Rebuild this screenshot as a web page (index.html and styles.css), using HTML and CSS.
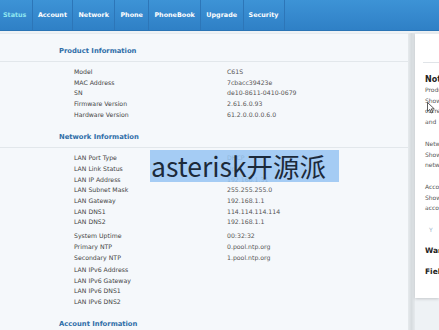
FILE: index.html
```html
<!DOCTYPE html>
<html>
<head>
<meta charset="utf-8">
<link rel="stylesheet" href="styles.css">
</head>
<body>
<div class="nav">
  <div class="tab active">Status</div>
  <div class="tab">Account</div>
  <div class="tab">Network</div>
  <div class="tab">Phone</div>
  <div class="tab">PhoneBook</div>
  <div class="tab">Upgrade</div>
  <div class="tab">Security</div>
</div>
<div class="page">
  <div class="main">
    <div class="sec-head">Product Information</div>
    <div class="group first">
      <div class="row"><span class="lbl">Model</span><span class="val">C61S</span></div>
      <div class="row"><span class="lbl">MAC Address</span><span class="val">7cbacc39423e</span></div>
      <div class="row"><span class="lbl">SN</span><span class="val">de10-8611-0410-0679</span></div>
      <div class="row"><span class="lbl">Firmware Version</span><span class="val">2.61.6.0.93</span></div>
      <div class="row"><span class="lbl">Hardware Version</span><span class="val">61.2.0.0.0.0.6.0</span></div>
    </div>
    <div class="sec-head">Network Information</div>
    <div class="group first">
      <div class="row"><span class="lbl">LAN Port Type</span><span class="val">DHCP</span></div>
      <div class="row"><span class="lbl">LAN Link Status</span><span class="val">Up</span></div>
      <div class="row"><span class="lbl">LAN IP Address</span><span class="val">192.168.1.31</span></div>
      <div class="row"><span class="lbl">LAN Subnet Mask</span><span class="val">255.255.255.0</span></div>
      <div class="row"><span class="lbl">LAN Gateway</span><span class="val">192.168.1.1</span></div>
      <div class="row"><span class="lbl">LAN DNS1</span><span class="val">114.114.114.114</span></div>
      <div class="row"><span class="lbl">LAN DNS2</span><span class="val">192.168.1.1</span></div>
    </div>
    <div class="group">
      <div class="row"><span class="lbl">System Uptime</span><span class="val">00:32:32</span></div>
      <div class="row"><span class="lbl">Primary NTP</span><span class="val">0.pool.ntp.org</span></div>
      <div class="row"><span class="lbl">Secondary NTP</span><span class="val">1.pool.ntp.org</span></div>
    </div>
    <div class="group last">
      <div class="row"><span class="lbl">LAN IPv6 Address</span><span class="val"></span></div>
      <div class="row"><span class="lbl">LAN IPv6 Gateway</span><span class="val"></span></div>
      <div class="row"><span class="lbl">LAN IPv6 DNS1</span><span class="val"></span></div>
      <div class="row"><span class="lbl">LAN IPv6 DNS2</span><span class="val"></span></div>
    </div>
    <div class="sec-head">Account Information</div>
  </div>
  <div class="divider"></div>
  <div class="aside">
    <div class="aside-line"></div>
    <div class="note-title">Notes</div>
    <p class="note">Product Information<br>Shows the<br>current<br>and</p>
    <p class="note">Network<br>Shows the<br>network</p>
    <p class="note">Account<br>Shows the<br>account</p>
    <div class="note-y">Y</div>
    <div class="note-bold">Warning</div>
    <div class="note-bold">Field</div>
  </div>
</div>
<div class="watermark">asterisk开源派</div>
<svg class="cursor" width="8" height="12" viewBox="0 0 8 12"><path d="M0.5 0.5 L0.5 9.5 L2.8 7.4 L4.4 11 L5.8 10.4 L4.3 6.9 L7.3 6.9 Z" fill="#fff" stroke="#333" stroke-width="0.8"/></svg>
</body>
</html>
```
FILE: styles.css
```css
html, body {
  margin: 0;
  padding: 0;
}
body {
  width: 439px;
  height: 330px;
  overflow: hidden;
  background: #eef2f5;
  font-family: "DejaVu Sans", Verdana, sans-serif;
  position: relative;
}
.nav {
  height: 30px;
  display: flex;
  background: linear-gradient(#3d93d6, #2f80c6);
  border-bottom: 1px solid #2a74b5;
}
.tab {
  color: #ffffff;
  font-weight: bold;
  font-size: 6.4px;
  line-height: 30px;
  padding: 0 5.5px 0 5px;
  border-right: 1px solid #2d76b8;
}
.tab.active {
  color: #8fe6f0;
  padding-left: 3px;
}
.page {
  display: flex;
  padding-top: 2px;
  height: 297px;
}
.main {
  width: 408px;
  background: #f5f8fb;
  border-top: 1px solid #e6ebef;
  padding-top: 8px;
}
.sec-head {
  height: 19px;
  line-height: 19px;
  padding-left: 59px;
  color: #2f6ea8;
  font-weight: bold;
  font-size: 6.8px;
  border-bottom: 1px solid #e2e7eb;
}
.group {
  padding-left: 74px;
  margin-top: 2.3px;
}
.group.first {
  margin-top: 5px;
  margin-bottom: 8px;
}
.group.first + .group {
  margin-top: -4.5px;
}
.group.last {
  margin-top: 1.5px;
  margin-bottom: 8px;
}
.row {
  display: flex;
  height: 10.67px;
  line-height: 10.67px;
  font-size: 6.2px;
  color: #444;
}
.lbl {
  width: 153px;
}
.val {
  color: #555;
}
.divider {
  width: 7px;
  background: linear-gradient(90deg, #e6eaed, #d7dcdf 50%, #e6eaed);
}
.aside {
  flex: 1;
  background: #ffffff;
  height: 264px;
  border-top: 1px solid #e6ebef;
  box-shadow: 0 1px 3px rgba(0,0,0,0.18);
  padding-left: 10px;
  overflow: hidden;
  white-space: nowrap;
}
.aside-line {
  margin-top: 28px;
  height: 1px;
  background: #e0e4e8;
  margin-left: -2px;
}
.note-title {
  margin-top: 12px;
  font-weight: bold;
  font-size: 8px;
  color: #222;
  line-height: 10px;
}
.note {
  margin: 0 0 11px 0;
  font-size: 6px;
  line-height: 10.7px;
  color: #555;
}
.note-y {
  font-size: 6px;
  color: #9ab4cc;
  padding-left: 4px;
  line-height: 10px;
  margin-top: 0;
}
.note-bold {
  font-weight: bold;
  font-size: 7.5px;
  color: #222;
  line-height: 10px;
  margin-top: 11px;
}
.watermark {
  position: absolute;
  left: 150px;
  top: 150px;
  width: 189px;
  height: 32px;
  background: rgba(150, 196, 242, 0.85);
  font-family: "Noto Sans CJK SC", "DejaVu Sans", sans-serif;
  font-size: 26.5px;
  line-height: 32px;
  color: #1c2a3a;
  white-space: nowrap;
  overflow: hidden;
  padding-left: 1px;
  box-sizing: border-box;
}
.cursor {
  position: absolute;
  left: 427px;
  top: 102px;
}
```
